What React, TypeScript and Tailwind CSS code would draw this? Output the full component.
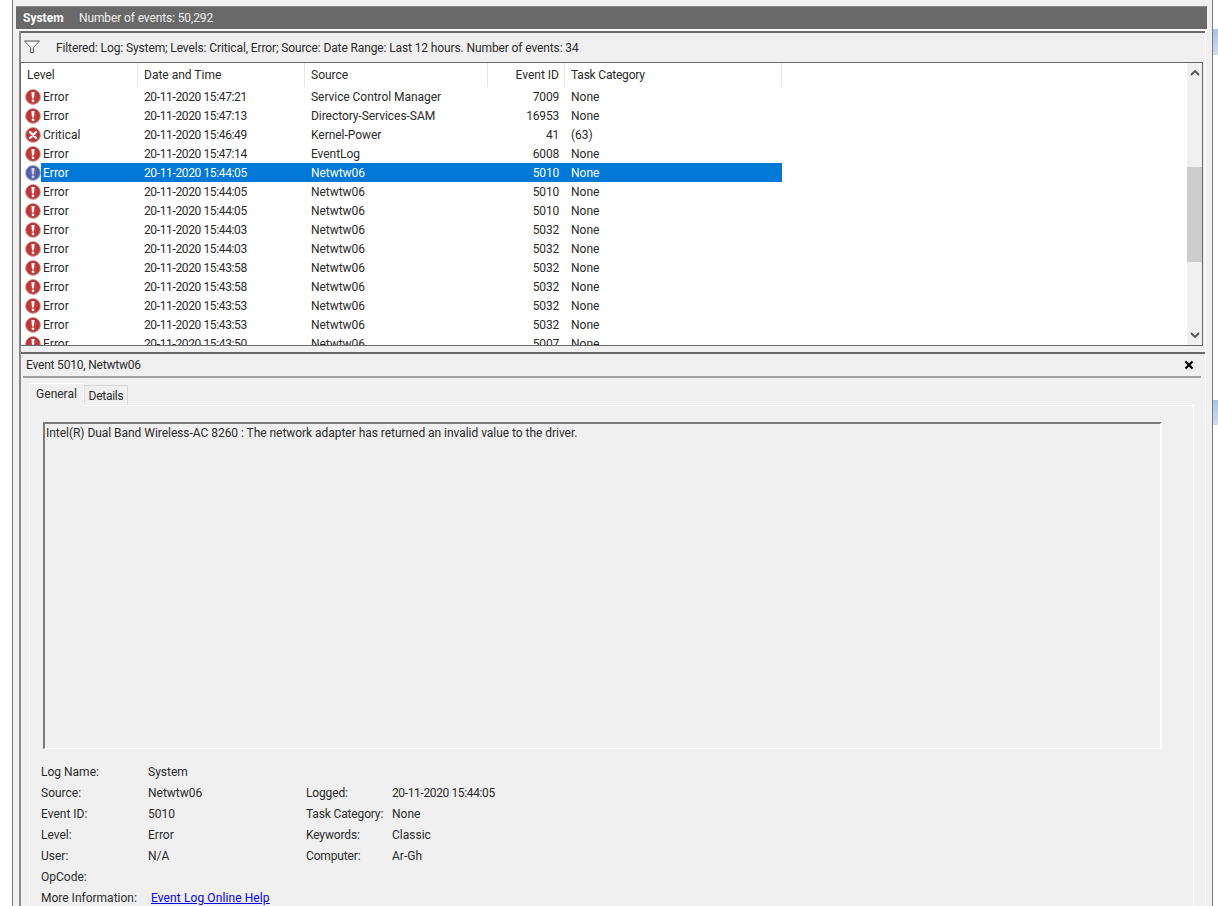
import React from "react";

type Row = { level: string; date: string; source: string; id: string; task: string; selected?: boolean };

const rows: Row[] = [
  { level: "Error", date: "20-11-2020 15:47:21", source: "Service Control Manager", id: "7009", task: "None" },
  { level: "Error", date: "20-11-2020 15:47:13", source: "Directory-Services-SAM", id: "16953", task: "None" },
  { level: "Critical", date: "20-11-2020 15:46:49", source: "Kernel-Power", id: "41", task: "(63)" },
  { level: "Error", date: "20-11-2020 15:47:14", source: "EventLog", id: "6008", task: "None" },
  { level: "Error", date: "20-11-2020 15:44:05", source: "Netwtw06", id: "5010", task: "None", selected: true },
  { level: "Error", date: "20-11-2020 15:44:05", source: "Netwtw06", id: "5010", task: "None" },
  { level: "Error", date: "20-11-2020 15:44:05", source: "Netwtw06", id: "5010", task: "None" },
  { level: "Error", date: "20-11-2020 15:44:03", source: "Netwtw06", id: "5032", task: "None" },
  { level: "Error", date: "20-11-2020 15:44:03", source: "Netwtw06", id: "5032", task: "None" },
  { level: "Error", date: "20-11-2020 15:43:58", source: "Netwtw06", id: "5032", task: "None" },
  { level: "Error", date: "20-11-2020 15:43:58", source: "Netwtw06", id: "5032", task: "None" },
  { level: "Error", date: "20-11-2020 15:43:53", source: "Netwtw06", id: "5032", task: "None" },
  { level: "Error", date: "20-11-2020 15:43:53", source: "Netwtw06", id: "5032", task: "None" },
  { level: "Error", date: "20-11-2020 15:43:50", source: "Netwtw06", id: "5007", task: "None" },
];

function LevelIcon({ critical, selected }: { critical?: boolean; selected?: boolean }) {
  const id = selected ? "g-sel" : critical ? "g-crit" : "g-err";
  return (
    <svg width="16" height="16" viewBox="0 0 16 16" className="block">
      <defs>
        <radialGradient id={id} cx="50%" cy="45%" r="60%">
          <stop offset="0%" stopColor={selected ? "#6a72b4" : "#d04a4a"} />
          <stop offset="65%" stopColor={selected ? "#4f5aa4" : "#b93030"} />
          <stop offset="100%" stopColor={selected ? "#8a98c8" : "#c97a7a"} />
        </radialGradient>
      </defs>
      <circle cx="8" cy="8" r="7.5" fill={`url(#${id})`} stroke={selected ? "#9aa6cc" : "#c8a0a0"} strokeWidth="0.8" />
      {critical ? (
        <path d="M5 5 L11 11 M11 5 L5 11" stroke="#f8eeee" strokeWidth="2.4" strokeLinecap="round" />
      ) : (
        <>
          <path d="M6.4 3 H9.6 L8.9 9.5 H7.1 Z" fill={selected ? "#cfd4ec" : "#fff4f4"} />
          <circle cx="8" cy="11.8" r="1.4" fill={selected ? "#cfd4ec" : "#fff4f4"} />
        </>
      )}
    </svg>
  );
}

function Sep() {
  return <div className="absolute right-0 top-0 h-[24px] w-px bg-[#e5e5e5]" />;
}

function TableHeader() {
  return (
    <div className="flex h-[24px] shrink-0 items-center text-[#2a2a2a]">
      <div className="relative flex h-full w-[117px] items-center pl-[6px]">Level<Sep /></div>
      <div className="relative flex h-full w-[167px] items-center pl-[6px]">Date and Time<Sep /></div>
      <div className="relative flex h-full w-[183px] items-center pl-[6px]">Source<Sep /></div>
      <div className="relative flex h-full w-[77px] items-center justify-end pr-[6px]">Event ID<Sep /></div>
      <div className="relative flex h-full w-[217px] items-center pl-[6px] tracking-[-0.2px]">Task Category<Sep /></div>
    </div>
  );
}

function TableRow({ row }: { row: Row }) {
  return (
    <div className="flex h-[19px] shrink-0 items-center">
      <div className="flex h-full w-[20px] items-center pl-[4px]">
        <LevelIcon critical={row.level === "Critical"} selected={row.selected} />
      </div>
      <div className={row.selected ? "flex h-full w-[741px] items-center bg-[#0078d7] text-white" : "flex h-full w-[741px] items-center text-[#2a2a2a]"}>
        <div className="w-[97px] pl-[2px]">{row.level}</div>
        <div className="w-[167px] pl-[6px] tracking-[-0.37px]">{row.date}</div>
        <div className="w-[183px] pl-[6px] tracking-[-0.05px]">{row.source}</div>
        <div className="w-[77px] pr-[6px] text-right tracking-[-0.2px]">{row.id}</div>
        <div className="w-[217px] pl-[6px]">{row.task}</div>
      </div>
    </div>
  );
}

function Scrollbar() {
  return (
    <div className="flex w-[15px] shrink-0 flex-col bg-[#f0f0f0]">
      <div className="flex h-[20px] shrink-0 items-center justify-center">
        <svg width="10" height="8" viewBox="0 0 10 8"><path d="M1 6 L5 2 L9 6" fill="none" stroke="#505050" strokeWidth="1.8" /></svg>
      </div>
      <div className="mt-[84px] h-[95px] shrink-0 bg-[#cdcdcd]" />
      <div className="flex-1" />
      <div className="flex h-[20px] shrink-0 items-center justify-center">
        <svg width="10" height="8" viewBox="0 0 10 8"><path d="M1 2 L5 6 L9 2" fill="none" stroke="#505050" strokeWidth="1.8" /></svg>
      </div>
    </div>
  );
}

function Info({ label, value, label2, value2, dense }: { label: string; value: React.ReactNode; label2?: string; value2?: string; dense?: boolean }) {
  return (
    <div className="flex h-[21px] items-center">
      <div className="w-[107px]">{label}</div>
      <div className="w-[158px]">{value}</div>
      {label2 ? <div className="w-[86px] tracking-[-0.15px]">{label2}</div> : null}
      {value2 ? <div className={dense ? "tracking-[-0.37px]" : ""}>{value2}</div> : null}
    </div>
  );
}

export default function App() {
  return (
    <div
      className="flex h-[906px] w-[1218px] overflow-hidden bg-[#f0f0f0] text-[12px] leading-[16px] text-[#2a2a2a]"
      style={{ fontFamily: 'Roboto, "Noto Sans", sans-serif' }}
    >
      <div className="h-full w-[13px] shrink-0 border-r border-[#7a7a7a] bg-white" />

      <div className="flex h-full w-[1194px] shrink-0 flex-col pl-[3px]">
        <div className="h-[6px] shrink-0" />
        <div className="flex h-[23px] shrink-0 items-center border-t border-[#888888] bg-[#696969] pl-[7px] text-white">
          <span className="w-[56px] font-bold">System</span>
          <span className="tracking-[-0.12px] text-[#f0f0f0]">Number of events: 50,292</span>
        </div>
        <div className="h-[2px] shrink-0 bg-[#fafafa]" />

        <div className="ml-[3px] mr-[1px] flex min-h-0 flex-1 flex-col border-l-2 border-r border-l-[#8a8a8a] border-r-white">
          <div className="flex h-[31px] shrink-0 items-center border-t-2 border-[#696969] pl-[3px]">
            <svg width="16" height="14" viewBox="0 0 16 14" className="-mt-[2px] shrink-0">
              <path d="M0.5 1 H15.5 L9.5 7.5 V12.5 L6.5 12.5 V7.5 Z" fill="#e4e4e4" stroke="#5a5a5a" strokeWidth="1" />
              <path d="M2.5 2.5 H13.5 L10.5 5.5 H5.5 Z" fill="#ffffff" />
            </svg>
            <span className="ml-[16px] tracking-[-0.115px]">Filtered: Log: System; Levels: Critical, Error; Source: Date Range: Last 12 hours. Number of events: 34</span>
          </div>

          <div className="-ml-[1px] mr-[2px] flex h-[284px] shrink-0 border border-[#696969] bg-white">
            <div className="flex min-w-0 flex-1 flex-col overflow-hidden">
              <TableHeader />
              {rows.map((r, i) => (
                <TableRow key={i} row={r} />
              ))}
            </div>
            <Scrollbar />
          </div>

          <div className="h-[6px] shrink-0" />

          <div className="flex min-h-0 flex-1 flex-col border-t-2 border-[#696969]">
            <div className="flex h-[22px] shrink-0 items-center justify-between pl-[5px] pr-[11px]">
              <span className="tracking-[-0.2px]">Event 5010, Netwtw06</span>
              <svg width="10" height="10" viewBox="0 0 10 10"><path d="M1.5 1.5 L8.5 8.5 M8.5 1.5 L1.5 8.5" stroke="#000000" strokeWidth="2.2" /></svg>
            </div>
            <div className="ml-[2px] mr-[4px] h-[2px] shrink-0 bg-[#a0a0a0]" />

            <div className="flex h-[4px] shrink-0" />

            <div className="ml-[8px] flex h-[23px] shrink-0 items-end">
              <div className="z-10 -mb-px flex h-[23px] w-[55px] items-center justify-center border border-b-0 border-[#ffffff] bg-[#f0f0f0] pb-[2px]">General</div>
              <div className="flex h-[20px] w-[44px] items-center justify-center border border-b-0 border-[#d9d9d9] bg-[#f0f0f0] tracking-[-0.25px]">Details</div>
            </div>

            <div className="ml-[8px] mr-[11px] flex min-h-0 flex-1 flex-col border-l border-t border-r border-white px-[13px] pt-[16px]">
              <div className="mr-[18px] h-[327px] shrink-0 border-l-2 border-t-2 border-b border-r-2 border-b-[#ffffff] border-l-[#7a7a7a] border-r-[#ffffff] border-t-[#7a7a7a] pl-[1px] pt-[1px] tracking-[-0.04px]">
                Intel(R) Dual Band Wireless-AC 8260 : The network adapter has returned an invalid value to the driver.
              </div>
              <div className="-ml-[2px] mt-[12px]">
                <Info label="Log Name:" value="System" />
                <Info label="Source:" value="Netwtw06" label2="Logged:" value2="20-11-2020 15:44:05" dense />
                <Info label="Event ID:" value="5010" label2="Task Category:" value2="None" />
                <Info label="Level:" value="Error" label2="Keywords:" value2="Classic" />
                <Info label="User:" value="N/A" label2="Computer:" value2="Ar-Gh" />
                <Info label="OpCode:" value="" />
                <Info label="More Information:" value={<a href="#" className="ml-[3px] whitespace-nowrap tracking-[0.1px] text-[#0000ee] underline">Event Log Online Help</a>} />
              </div>
            </div>
          </div>
        </div>
      </div>

      <div className="h-full w-[5px] shrink-0" />

      <div className="flex h-full min-w-0 flex-1 flex-col border-l border-[#7a7a7a] bg-white">
        <div className="mt-[29px] h-[26px] shrink-0 bg-linear-to-b from-[#a8c4e6] to-[#cfdcec]" />
        <div className="mt-[345px] h-[25px] shrink-0 bg-linear-to-b from-[#a8c4e6] to-[#cfdcec]" />
      </div>
    </div>
  );
}
